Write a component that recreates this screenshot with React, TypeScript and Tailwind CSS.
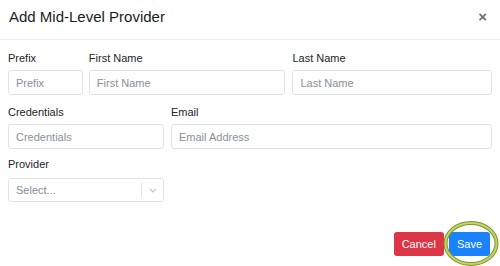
import React from "react";

const font = { fontFamily: '"Liberation Sans", Arial, sans-serif' };

function Field({ label, placeholder, className }: { label: string; placeholder: string; className: string }) {
  return (
    <div className={className}>
      <label className="block text-[11px] leading-[14px] text-[#212529] mb-[5px]">{label}</label>
      <input
        placeholder={placeholder}
        className="block w-full h-[25px] rounded-[3px] border border-[#dfe3e8] bg-white px-[7px] text-[11px] text-[#495057] placeholder:text-[#8a9097] outline-none"
      />
    </div>
  );
}

export default function App() {
  return (
    <div className="relative w-[500px] h-[266px] bg-white overflow-hidden" style={font}>
      {/* Header */}
      <div className="flex items-start justify-between h-[40px] border-b border-[#eceef0] pl-[9px] pr-[13px] pt-[8px]">
        <h5 className="text-[15px] leading-[18px] text-[#1a1d20] font-medium">Add Mid-Level Provider</h5>
        <span className="text-[15px] leading-[14px] font-bold text-[#6b6b6b] mt-[2px]">×</span>
      </div>

      {/* Body */}
      <div className="px-[8px] pt-[11px]">
        <div className="flex gap-[6px] mb-[10px]">
          <Field className="w-[75px]" label="Prefix" placeholder="Prefix" />
          <Field className="w-[197px]" label="First Name" placeholder="First Name" />
          <Field className="w-[200px] ml-[1px]" label="Last Name" placeholder="Last Name" />
        </div>
        <div className="flex gap-[7px] mb-[8px]">
          <Field className="w-[156px]" label="Credentials" placeholder="Credentials" />
          <Field className="w-[321px]" label="Email" placeholder="Email Address" />
        </div>
        <div className="w-[156px]">
          <label className="block text-[11px] leading-[14px] text-[#212529] mb-[7px]">Provider</label>
          <div className="flex items-center h-[24px] rounded-[3px] border border-[#dfe3e8] bg-white">
            <span className="flex-1 pl-[7px] text-[11px] text-[#8a9097]">Select...</span>
            <span className="w-px h-[14px] bg-[#e3e3e3]" />
            <span className="w-[21px] flex justify-center">
              <svg width="8" height="5" viewBox="0 0 8 5">
                <path d="M1 1 L4 4 L7 1" stroke="#c4c4c4" strokeWidth="1.2" fill="none" />
              </svg>
            </span>
          </div>
        </div>
      </div>

      {/* Footer */}
      <div className="flex justify-end gap-[5px] pr-[10px] mt-[30px]">
        <button className="h-[24px] px-[8px] rounded-[3px] bg-[#dc3545] text-white text-[11px]">Cancel</button>
        <button className="h-[24px] px-[8px] rounded-[3px] bg-[#1a82fb] text-white text-[11px]">Save</button>
      </div>

      {/* highlight circle */}
      <svg className="absolute left-[443px] top-[221px]" width="58" height="45" viewBox="0 0 58 45">
        <ellipse cx="28" cy="22.5" rx="25.5" ry="20.5" fill="none" stroke="#7f942f" strokeWidth="4" />
        <ellipse cx="28" cy="22.5" rx="25.5" ry="20.5" fill="none" stroke="#c3d663" strokeWidth="2" />
      </svg>
    </div>
  );
}
